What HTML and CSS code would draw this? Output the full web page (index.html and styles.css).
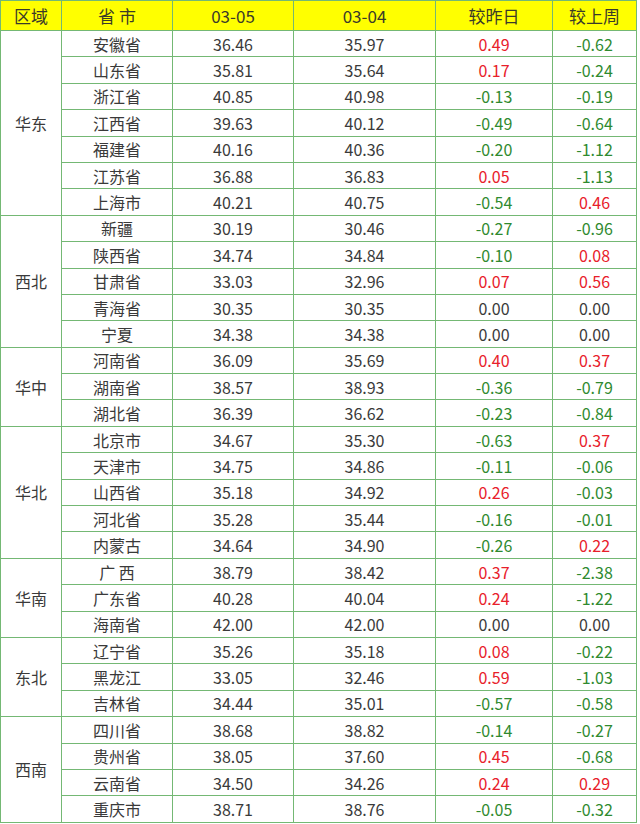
FILE: index.html
```html
<!DOCTYPE html>
<html><head><meta charset="utf-8"><link rel="stylesheet" href="styles.css"></head>
<body>
<table class="t">
<colgroup><col class="c1"><col class="c2"><col class="c3"><col class="c4"><col class="c5"><col class="c6"></colgroup>
<thead><tr class="hd"><th>区域</th><th>省 市</th><th>03-05</th><th>03-04</th><th>较昨日</th><th>较上周</th></tr></thead>
<tbody>
<tr><td class="rg" rowspan="7">华东</td><td>安徽省</td><td>36.46</td><td>35.97</td><td class="r">0.49</td><td class="g">-0.62</td></tr>
<tr><td>山东省</td><td>35.81</td><td>35.64</td><td class="r">0.17</td><td class="g">-0.24</td></tr>
<tr><td>浙江省</td><td>40.85</td><td>40.98</td><td class="g">-0.13</td><td class="g">-0.19</td></tr>
<tr><td>江西省</td><td>39.63</td><td>40.12</td><td class="g">-0.49</td><td class="g">-0.64</td></tr>
<tr><td>福建省</td><td>40.16</td><td>40.36</td><td class="g">-0.20</td><td class="g">-1.12</td></tr>
<tr><td>江苏省</td><td>36.88</td><td>36.83</td><td class="r">0.05</td><td class="g">-1.13</td></tr>
<tr><td>上海市</td><td>40.21</td><td>40.75</td><td class="g">-0.54</td><td class="r">0.46</td></tr>
<tr><td class="rg" rowspan="5">西北</td><td>新疆</td><td>30.19</td><td>30.46</td><td class="g">-0.27</td><td class="g">-0.96</td></tr>
<tr><td>陕西省</td><td>34.74</td><td>34.84</td><td class="g">-0.10</td><td class="r">0.08</td></tr>
<tr><td>甘肃省</td><td>33.03</td><td>32.96</td><td class="r">0.07</td><td class="r">0.56</td></tr>
<tr><td>青海省</td><td>30.35</td><td>30.35</td><td>0.00</td><td>0.00</td></tr>
<tr><td>宁夏</td><td>34.38</td><td>34.38</td><td>0.00</td><td>0.00</td></tr>
<tr><td class="rg" rowspan="3">华中</td><td>河南省</td><td>36.09</td><td>35.69</td><td class="r">0.40</td><td class="r">0.37</td></tr>
<tr><td>湖南省</td><td>38.57</td><td>38.93</td><td class="g">-0.36</td><td class="g">-0.79</td></tr>
<tr><td>湖北省</td><td>36.39</td><td>36.62</td><td class="g">-0.23</td><td class="g">-0.84</td></tr>
<tr><td class="rg" rowspan="5">华北</td><td>北京市</td><td>34.67</td><td>35.30</td><td class="g">-0.63</td><td class="r">0.37</td></tr>
<tr><td>天津市</td><td>34.75</td><td>34.86</td><td class="g">-0.11</td><td class="g">-0.06</td></tr>
<tr><td>山西省</td><td>35.18</td><td>34.92</td><td class="r">0.26</td><td class="g">-0.03</td></tr>
<tr><td>河北省</td><td>35.28</td><td>35.44</td><td class="g">-0.16</td><td class="g">-0.01</td></tr>
<tr><td>内蒙古</td><td>34.64</td><td>34.90</td><td class="g">-0.26</td><td class="r">0.22</td></tr>
<tr><td class="rg" rowspan="3">华南</td><td>广 西</td><td>38.79</td><td>38.42</td><td class="r">0.37</td><td class="g">-2.38</td></tr>
<tr><td>广东省</td><td>40.28</td><td>40.04</td><td class="r">0.24</td><td class="g">-1.22</td></tr>
<tr><td>海南省</td><td>42.00</td><td>42.00</td><td>0.00</td><td>0.00</td></tr>
<tr><td class="rg" rowspan="3">东北</td><td>辽宁省</td><td>35.26</td><td>35.18</td><td class="r">0.08</td><td class="g">-0.22</td></tr>
<tr><td>黑龙江</td><td>33.05</td><td>32.46</td><td class="r">0.59</td><td class="g">-1.03</td></tr>
<tr><td>吉林省</td><td>34.44</td><td>35.01</td><td class="g">-0.57</td><td class="g">-0.58</td></tr>
<tr><td class="rg" rowspan="4">西南</td><td>四川省</td><td>38.68</td><td>38.82</td><td class="g">-0.14</td><td class="g">-0.27</td></tr>
<tr><td>贵州省</td><td>38.05</td><td>37.60</td><td class="r">0.45</td><td class="g">-0.68</td></tr>
<tr><td>云南省</td><td>34.50</td><td>34.26</td><td class="r">0.24</td><td class="r">0.29</td></tr>
<tr><td>重庆市</td><td>38.71</td><td>38.76</td><td class="g">-0.05</td><td class="g">-0.32</td></tr>
</tbody>
</table>
</body></html>
```
FILE: styles.css
```css
html, body { margin: 0; padding: 0; background: #fff; }
.t {
  border-collapse: collapse;
  table-layout: fixed;
  width: 636px;
  font-family: "Noto Sans CJK SC", "Noto Sans", sans-serif;
  font-size: 16px;
  color: #3a3a3a;
}
.c1 { width: 61px; }
.c2 { width: 111px; }
.c3 { width: 121px; }
.c4 { width: 142px; }
.c5 { width: 117px; }
.c6 { width: 84px; }
.t th, .t td {
  border: 1px solid #74b874;
  text-align: center;
  padding: 0;
  line-height: 1;
}
.hd th {
  background: #ffff00;
  font-weight: normal;
  height: 29px;
  color: #3a3a2a;
  font-size: 17px;
}
.t tbody td { height: 25.4px; }
.r { color: #e8202a; }
.g { color: #2f8a2f; }
```
